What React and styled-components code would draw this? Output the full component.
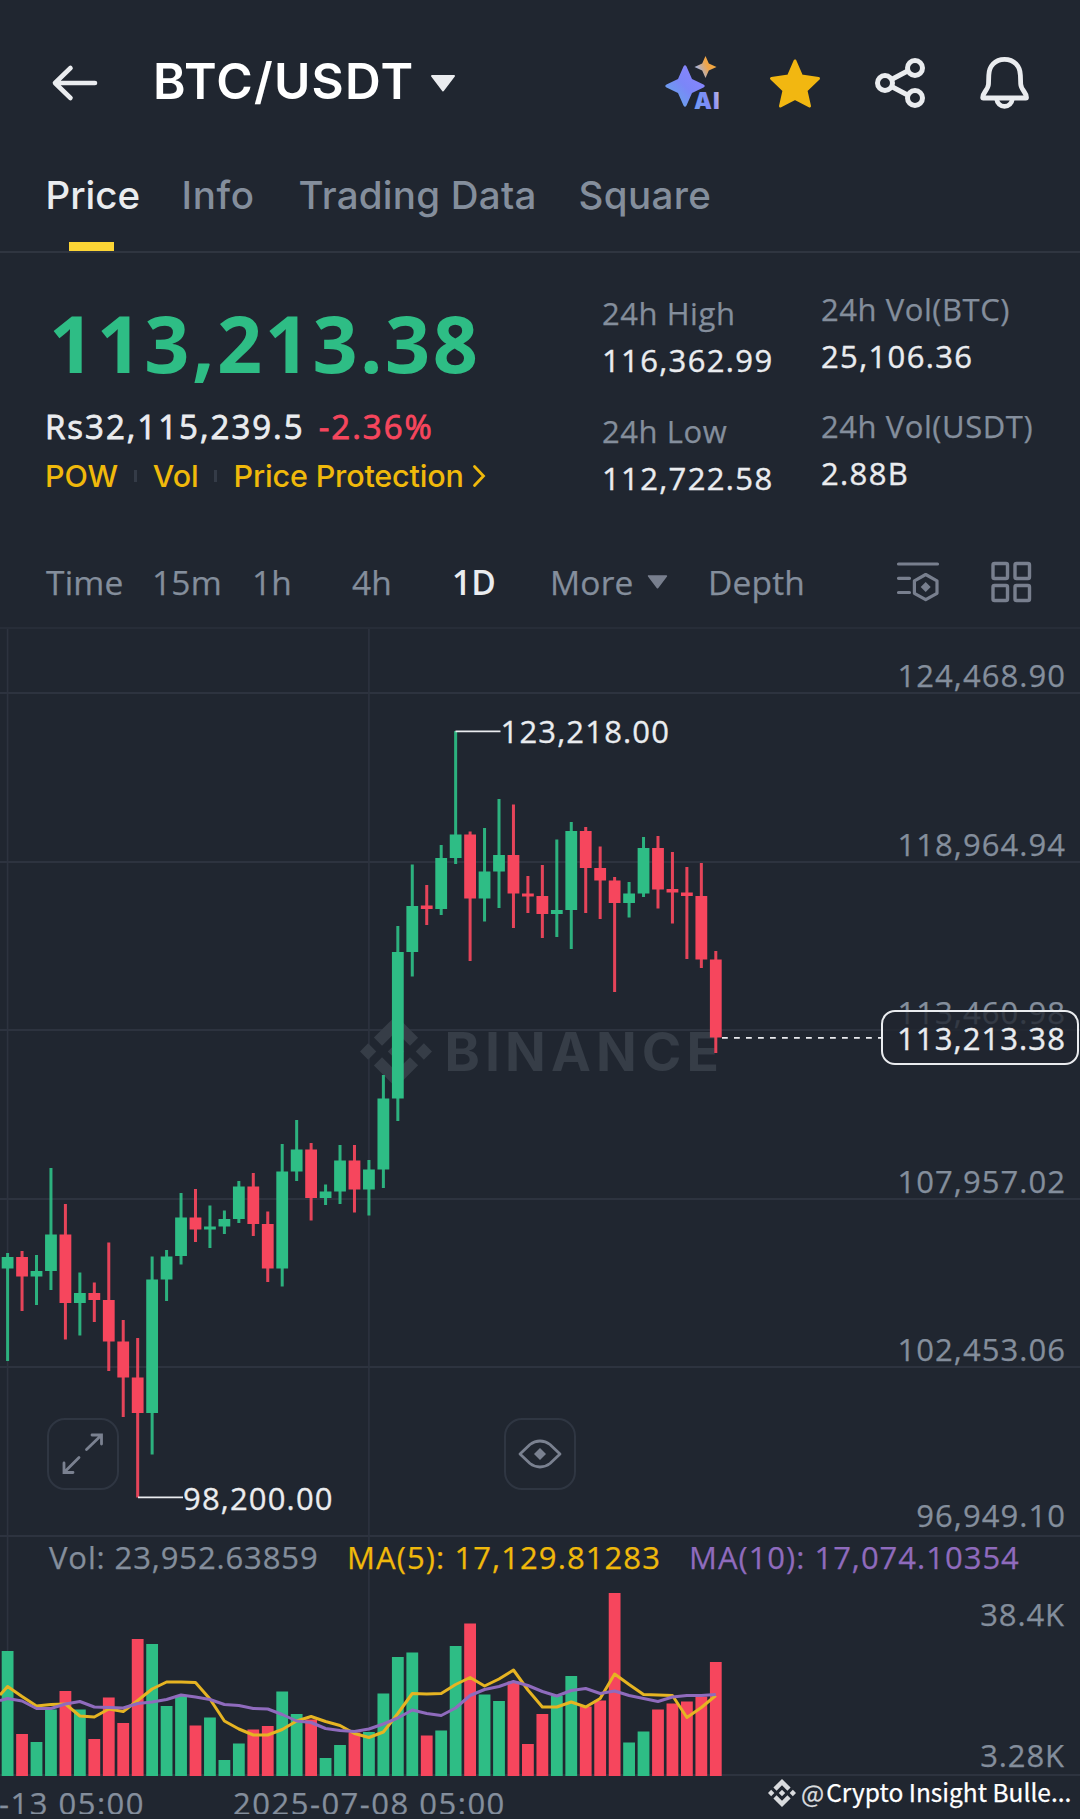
import React from 'react';
import styled, { createGlobalStyle } from 'styled-components';

const GlobalStyle = createGlobalStyle`
  :root {
    --bg: #202630;
    --line: #2d333f;
    --text-main: #eaecef;
    --text-gray: #848e9c;
    --green: #2ebd85;
    --red: #f6465d;
    --yellow: #f0b90b;
    --purple: #8f6bbd;
    --font-title: Inter, 'Liberation Sans', sans-serif;
    --font-number: 'Open Sans', 'Noto Sans', sans-serif;
  }

  * {
    box-sizing: border-box;
  }

  body {
    margin: 0;
    background: var(--bg);
    overflow: hidden;
  }
`;

const StyledPage = styled.div`
  width: 1080px;
  height: 1819px;
  overflow: hidden;
  display: flex;
  flex-direction: column;
  background: var(--bg);
  color: var(--text-main);
  font-family: var(--font-number);
  white-space: nowrap;
`;

/* ---------- header ---------- */

const StyledHeader = styled.header`
  height: 166px;
  flex: none;
  display: flex;
  align-items: center;
  padding: 0 47px 0 50px;
  font-family: var(--font-title);
`;

const StyledTitle = styled.h1`
  margin: 0 0 4px 53px;
  width: 277px;
  font-size: 49.5px;
  line-height: 60px;
  font-weight: 600;
  letter-spacing: 1.2px;
  color: #fff;
`;

const StyledHeaderIcons = styled.div`
  margin-left: auto;
  display: flex;
  gap: 45px;
`;

/* ---------- tabs ---------- */

const StyledTabs = styled.nav`
  height: 87px;
  flex: none;
  display: grid;
  grid-template-columns: 136px 117px 280px 140px;
  padding-left: 45.5px;
  border-bottom: 2px solid #2f3540;
  font-family: var(--font-title);
`;

const StyledTab = styled.div`
  display: flex;
  flex-direction: column;
  justify-content: space-between;
  width: max-content;
  font-size: 38.5px;
  line-height: 58px;
  font-weight: 500;
  letter-spacing: ${(p) => p.$ls}px;
  color: ${(p) => (p.$active ? 'var(--text-main)' : 'var(--text-gray)')};

  &::after {
    content: '';
    width: 45px;
    height: 9px;
    margin-right: 3px;
    align-self: center;
    background: ${(p) => (p.$active ? '#fcd535' : 'transparent')};
  }
`;

/* ---------- ticker ---------- */

const StyledTicker = styled.section`
  height: 283px;
  flex: none;
  display: grid;
  grid-template-columns: 557px 219px 1fr;
  padding-left: 45px;
`;

const StyledLastPrice = styled.div`
  margin: 39.5px 0 9px 4px;
  font-size: 79px;
  line-height: 100px;
  font-weight: 700;
  letter-spacing: 2.5px;
  color: var(--green);
`;

const StyledFiat = styled.div`
  display: flex;
  gap: 14px;
  font-size: 33px;
  line-height: 49px;
  letter-spacing: 2px;
  -webkit-text-stroke: 0.8px currentColor;
`;

const StyledChange = styled.span`
  color: var(--red);
`;

const StyledTags = styled.div`
  display: flex;
  align-items: center;
  font-family: var(--font-title);
  font-size: 30.5px;
  line-height: 50px;
  font-weight: 500;
  letter-spacing: -0.15px;
  color: var(--yellow);
`;

const StyledTagDivider = styled.i`
  width: 3px;
  height: 12px;
  margin: 0 16px;
  background: #343b47;
`;

const StyledStats = styled.div`
  padding-top: ${(p) => p.$top}px;
  display: flex;
  flex-direction: column;
  gap: 24px;
  font-size: 31px;
  line-height: ${(p) => p.$lh}px;
`;

const StyledStatLabel = styled.div`
  letter-spacing: 0.55px;
  color: var(--text-gray);
  -webkit-text-stroke: 0.25px currentColor;
`;

const StyledStatValue = styled.div`
  letter-spacing: 1.35px;
  color: var(--text-main);
  -webkit-text-stroke: 0.4px currentColor;
`;

/* ---------- intervals ---------- */

const StyledIntervals = styled.nav`
  height: 93px;
  flex: none;
  display: grid;
  grid-template-columns: 106px 100px 100px 100px 98px 158px 188px 94px 42px;
  align-items: center;
  padding: 1px 0 0 46px;
  font-size: 33.5px;
  color: var(--text-gray);
  border-bottom: 2px solid #272d38;
`;

const StyledInterval = styled.div`
  display: flex;
  align-items: center;
  gap: 13px;
  letter-spacing: 0.2px;
  font-weight: ${(p) => (p.$active ? 600 : 400)};
  color: ${(p) => (p.$active ? 'var(--text-main)' : 'inherit')};
  -webkit-text-stroke: ${(p) => (p.$active ? 0 : 0.25)}px currentColor;
`;

/* ---------- chart ---------- */

const StyledChart = styled.section`
  position: relative;
  height: 1147px;
  flex: none;
`;

const StyledPlot = styled.svg`
  position: absolute;
  inset: 0;
`;

const StyledPriceRow = styled.div`
  height: ${(p) => p.$h}px;
  display: flex;
  flex-direction: column;
  justify-content: flex-end;
  align-items: flex-end;
  padding: 0 14px ${(p) => p.$pb || 1}px 0;
  border-bottom: 2px solid var(--line);
  font-size: 31px;
  line-height: 32px;
  letter-spacing: 1.05px;
  color: var(--text-gray);
  -webkit-text-stroke: 0.25px currentColor;
`;

const StyledLegend = styled.div`
  position: relative;
  z-index: 1;
  display: grid;
  grid-template-columns: 298px 342px 1fr;
  padding: 0 0 0 49px;
  font-size: 31px;
  line-height: 41px;
  -webkit-text-stroke: 0.25px currentColor;
`;

const StyledLegendItem = styled.span`
  letter-spacing: ${(p) => p.$ls}px;
  color: ${(p) => p.$color};
`;

const StyledVolumeScale = styled.div`
  height: 198px;
  display: flex;
  flex-direction: column;
  justify-content: space-between;
  align-items: flex-end;
  padding: 20px 15px 3px 0;
  border-bottom: 2px solid var(--line);
  font-size: 31px;
  line-height: 32px;
  letter-spacing: 0.9px;
  color: var(--text-gray);
  -webkit-text-stroke: 0.25px currentColor;
`;

const StyledPriceTag = styled.div`
  position: absolute;
  top: 381px;
  right: 1px;
  width: 198px;
  height: 55px;
  padding-right: 11px;
  border: 2px solid var(--text-main);
  border-radius: 14px;
  background: rgba(32, 38, 48, 0.8);
  font-size: 31px;
  line-height: 53px;
  letter-spacing: 1.1px;
  text-align: right;
  -webkit-text-stroke: 0.4px currentColor;
`;

const StyledChartButton = styled.div`
  position: absolute;
  top: 789px;
  left: ${(p) => p.$left}px;
  width: 72px;
  height: 72px;
  border: 2.5px solid #2f3642;
  border-radius: 18px;
  display: flex;
  align-items: center;
  justify-content: center;
`;

/* ---------- dates ---------- */

const StyledDates = styled.footer`
  height: 38px;
  flex: none;
  overflow: hidden;
  display: grid;
  grid-template-columns: 233px 535px 1fr;
  font-size: 31px;
  line-height: 55px;
  letter-spacing: 1.5px;
  color: var(--text-gray);
  -webkit-text-stroke: 0.25px currentColor;
`;

const StyledFirstDate = styled.span`
  width: 145px;
  overflow: hidden;
  display: flex;
  justify-content: flex-end;
`;

const StyledCredit = styled.div`
  display: flex;
  align-items: center;
  height: 34px;
  font-family: 'Noto Sans CJK SC', sans-serif;
  font-size: 24.5px;
  line-height: 32px;
  letter-spacing: 0;
  color: #fff;
`;

const StyledAt = styled.span`
  margin: 0 2px 0 5px;
  color: #d9dbde;
`;

const StyledAuthor = styled.span`
  height: 34px;
`;

const STEP = 14.453;
const FIRST_X = 7.6;
const BODY = 11.8;
const FLOOR = 1776;

// [up, high, body top, body bottom, low, volume]
const candles = [
  [1, 1253, 1257, 1268.5, 1361, 125],
  [0, 1251, 1257, 1276.5, 1311, 42],
  [1, 1255, 1271, 1276.5, 1305, 34],
  [1, 1168, 1234.5, 1271, 1290, 66.5],
  [0, 1204, 1234.5, 1303, 1339.5, 85],
  [1, 1272.5, 1293, 1303, 1335.5, 66.5],
  [0, 1282.5, 1293, 1300, 1322, 37],
  [0, 1242.5, 1300, 1341.5, 1371, 78.5],
  [0, 1320, 1341.5, 1377.5, 1417, 53],
  [0, 1338, 1377.5, 1413, 1497.5, 137],
  [1, 1256.5, 1279.5, 1413, 1454.5, 132],
  [1, 1250, 1256.5, 1279.5, 1301, 70],
  [1, 1193, 1217.5, 1256, 1264.5, 80],
  [0, 1189, 1217.5, 1229.5, 1242, 50.5],
  [1, 1205.5, 1226.5, 1229.5, 1248, 58.5],
  [1, 1210.5, 1219, 1226.5, 1234, 16],
  [1, 1181, 1186.5, 1219, 1223, 32.5],
  [0, 1173, 1186.5, 1224, 1236, 46.5],
  [0, 1211.5, 1224, 1268.5, 1282, 50],
  [1, 1144, 1171.5, 1268.5, 1286.5, 84.5],
  [1, 1120, 1149.5, 1171.5, 1181, 62],
  [0, 1143, 1149.5, 1198, 1220.5, 56.5],
  [1, 1184.5, 1191.5, 1198, 1205, 18],
  [1, 1145, 1160.5, 1191.5, 1204, 31],
  [0, 1145, 1160.5, 1189.5, 1212.5, 43.5],
  [1, 1160, 1169.5, 1189.5, 1215.5, 44],
  [1, 1075, 1098.5, 1169.5, 1188, 82.5],
  [1, 926, 952, 1098.5, 1121, 119],
  [1, 864.5, 906, 952, 976.5, 123.5],
  [0, 885, 905.5, 909, 925, 40.5],
  [1, 845, 858, 909, 915, 45.5],
  [1, 731, 834.5, 858, 864, 130],
  [0, 831.5, 834.5, 898.5, 961, 152.5],
  [1, 828, 871.5, 898.5, 921.5, 81.5],
  [1, 799, 855, 871.5, 908, 75],
  [0, 804.5, 855, 893.5, 928, 94.5],
  [0, 876, 893.5, 896.5, 913, 32],
  [0, 865, 896, 914, 938, 62],
  [1, 839.5, 910, 914, 937, 80],
  [1, 822, 831, 910, 949, 100],
  [0, 827, 831, 868, 913, 69.5],
  [0, 846.5, 868, 880.5, 919, 75.5],
  [0, 877, 880.5, 903, 992, 183],
  [1, 882, 893.5, 903, 917.5, 33.5],
  [1, 837, 848, 893.5, 897, 44.5],
  [0, 836, 848, 889.5, 908.5, 66.5],
  [0, 852, 889, 892.5, 923.5, 72.5],
  [0, 867, 892.5, 896, 959, 74.5],
  [0, 863, 896, 959.5, 968, 79.5],
  [0, 951, 959.5, 1037.5, 1053, 114],
];

// First value sits on the left edge of the screen
const ma5 = [
  81, 89.5, 79.5, 70, 71.5, 72, 60, 59, 67, 64.5, 75.5, 87, 94, 94, 93.5, 77, 55, 47, 41, 41, 46.5, 55, 59.5, 54.5,
  50.5, 42.5, 38.5, 44, 62.5, 82.5, 82, 82.5, 91.5, 98.5, 90, 97, 106, 86, 69, 69, 74, 69, 77.5, 102, 91.5, 81.5, 81,
  80.5, 58.5, 68.5, 80.5,
];
const ma10 = [
  75.5, 77.5, 75, 67.5, 67.5, 72, 74.5, 69, 68.5, 68, 72.5, 74, 76.5, 81, 79, 76.5, 71.5, 70.5, 67.5, 67, 61.5, 55,
  53.5, 47.5, 45.5, 44.5, 47, 52, 58, 66, 62.5, 60.5, 68, 80.5, 86.5, 89.5, 94.5, 90.5, 84.5, 80, 85.5, 87.5, 82.5, 85,
  80.5, 77.5, 74.5, 79, 80.5, 80.5, 81.5,
];

const xAt = (i) => FIRST_X + i * STEP;
const toPoints = (line) => line.map((v, i) => `${i ? xAt(i - 1) : 0},${FLOOR - v}`).join(' ');

const BINANCE_LOGO =
  'M38.73 53.2 63.31 28.63 87.9 53.22l14.3-14.3L63.31 0 24.42 38.89ZM0 63.31 14.3 49l14.3 14.31-14.3 14.29ZM38.73 73.41 63.31 98 87.9 73.4l14.31 14.29L63.31 126.6 24.42 87.72ZM98 63.31 112.31 49l14.3 14.3-14.3 14.31ZM77.83 63.3 63.31 48.78 48.81 63.28 63.31 77.8Z';

const BackIcon = () => (
  <svg width="50" height="40" viewBox="50 63 50 40" fill="none" stroke="#eaecef" strokeWidth="4.6" strokeLinecap="round" strokeLinejoin="round">
    <path d="M95 83H55M70.5 68 55 83l15.500 15" />
  </svg>
);

const CaretIcon = ({ width, height, color }) => (
  <svg width={width} height={height} viewBox="0 0 26 17">
    <path d="M2 1h22L13 15.500Z" fill={color} stroke={color} strokeWidth="2" strokeLinejoin="round" />
  </svg>
);

const AiIcon = () => (
  <svg width="58" height="60" viewBox="664 53 58 60">
    <defs>
      <linearGradient id="ai-main" x1="0" y1="1" x2="1" y2="0">
        <stop offset="0" stopColor="#5fb0e6" />
        <stop offset="0.5" stopColor="#7b86f8" />
        <stop offset="1" stopColor="#8f84ff" />
      </linearGradient>
      <linearGradient id="ai-spark" x1="0" y1="0.8" x2="1" y2="0.3">
        <stop offset="0.2" stopColor="#a9b3d6" />
        <stop offset="0.6" stopColor="#f0a54a" />
        <stop offset="1" stopColor="#f2a93a" />
      </linearGradient>
      <linearGradient id="ai-text" x1="0" y1="0.6" x2="1" y2="0.4">
        <stop offset="0" stopColor="#6f9cf2" />
        <stop offset="0.7" stopColor="#8386fb" />
        <stop offset="1" stopColor="#b9b6dd" />
      </linearGradient>
    </defs>
    <path d="M683.500 66.500Q685 64 686.500 66.500L692 79 703.500 84.500Q706 86 703.500 87.500L692 93 686.500 105.500Q685 108 683.500 105.500L678 93 666.500 87.500Q664 86 666.500 84.500L678 79Z" fill="url(#ai-main)" />
    <path d="M705.500 56 708.800 63.500 716.500 67 708.800 70.500 705.500 78 702.200 70.500 694.500 67 702.200 63.500Z" fill="url(#ai-spark)" />
    <text x="694" y="109" textLength="25.500" fontWeight="900" fontSize="22.500" fill="url(#ai-text)">
      AI
    </text>
  </svg>
);

const StarIcon = () => (
  <svg width="56" height="60" viewBox="767 53 56 60">
    <path
      d="M795 61 801.500 76 818.500 78.500 806 90.500 809.500 106 795 98.500 780.500 106 784 90.500 771.500 78.500 788.500 76Z"
      fill="#f2b711"
      stroke="#f2b711"
      strokeWidth="3"
      strokeLinejoin="round"
    />
  </svg>
);

const ShareIcon = () => (
  <svg width="60" height="60" viewBox="868 53 60 60" fill="none" stroke="#eaecef" strokeWidth="5">
    <circle cx="885" cy="83" r="7.500" />
    <circle cx="915" cy="68" r="7.500" />
    <circle cx="915" cy="98" r="7.500" />
    <path d="m891.500 79.500 17-9M891.500 86.500l17 9" />
  </svg>
);

const BellIcon = () => (
  <svg width="60" height="60" viewBox="973 53 60 60" fill="none" stroke="#eaecef" strokeWidth="4.8" strokeLinejoin="round">
    <path d="M1004.500 59.300c-9.500 0-15.500 7-15.700 16l-.3 8.700c-.1 3-1.500 5-3.300 7.500-1.600 2.200-2.500 4-2.500 6 0 .5.200.5.700.5h42.400c.5 0 .7 0 .7-.5 0-2-.9-3.800-2.500-6-1.800-2.500-3.200-4.500-3.300-7.500l-.3-8.700c-.2-9-6.200-16-15.900-16Z" />
    <path d="M996.500 98.500c.7 5 4 7.800 8 7.800s7.300-2.800 8-7.800" />
  </svg>
);

const ChevronIcon = () => (
  <svg width="14" height="24" viewBox="0 0 14 24" fill="none" stroke="#f0b90b" strokeWidth="2.8" strokeLinecap="round">
    <path d="m2.500 2.500 9 9.500-9 9.500" />
  </svg>
);

const IndicatorIcon = () => (
  <svg width="44" height="44" viewBox="896 561.5 44 44" fill="none" stroke="#787f8e" strokeWidth="3.200">
    <path d="M898.500 565.500h39M898.500 579.800h11M898.500 594h11" strokeLinecap="round" />
    <path d="M925.700 576 937 582.300v12.500l-11.300 6.400-11.300-6.400v-12.500Z" strokeLinejoin="round" />
    <path d="m925.700 583.500 5 5-5 5-5-5Z" fill="#787f8e" stroke="none" />
  </svg>
);

const LayoutIcon = () => (
  <svg width="42" height="42" viewBox="990 561.5 42 42" fill="none" stroke="#787f8e" strokeWidth="3.400">
    <rect x="993" y="564" width="14.500" height="15" rx="1.500" />
    <rect x="1015" y="564" width="14.500" height="15" rx="1.500" />
    <rect x="993" y="586" width="14.500" height="15" rx="1.500" />
    <rect x="1015" y="586" width="14.500" height="15" rx="1.500" />
  </svg>
);

const ExpandIcon = () => (
  <svg width="42" height="42" viewBox="62 1433 42 42" fill="none" stroke="#7a8190" strokeWidth="2.800" strokeLinecap="round">
    <path d="M86.500 1449.500 101 1435.500M92 1435h9.500v9M79 1457.500 64.500 1472M64 1463v9.500h9" />
  </svg>
);

const EyeIcon = () => (
  <svg width="44" height="30" viewBox="0 0 44 30" fill="none" stroke="#7a8190" strokeWidth="2.800" strokeLinejoin="round">
    <path d="M2 15 12 5.500Q16.500 2 22 2T32 5.500L42 15 32 24.500Q27.500 28 22 28T12 24.500Z" />
    <path d="m22 9 6 6-6 6-6-6Z" fill="#7a8190" stroke="none" />
  </svg>
);

const Plot = () => (
  <StyledPlot width="1080" height="1147" viewBox="0 629 1080 1147">
    <g stroke="#2d333f" strokeWidth="1.600">
      <path d={`M${xAt(0)} 629V1776M${xAt(25)} 629V1776`} />
    </g>
    <g fill="#363d47">
      <path d={BINANCE_LOGO} transform="translate(360 1015.500) scale(0.5687)" />
      <text x="444.500" y="1071" textLength="274.500" fontFamily="Inter" fontWeight="700" fontSize="53.500">
        BINANCE
      </text>
    </g>
    {candles.map(([up, high, top, bottom, low, vol], i) => (
      <g key={i} fill={up ? 'var(--green)' : 'var(--red)'}>
        <rect x={xAt(i) - 1.5} y={high} width="3" height={low - high} opacity="0.92" />
        <rect x={xAt(i) - BODY / 2} y={top} width={BODY} height={bottom - top} />
        <rect x={xAt(i) - BODY / 2} y={FLOOR - vol} width={BODY} height={vol} />
      </g>
    ))}
    <g fill="none" strokeWidth="3" strokeLinejoin="round">
      <polyline points={toPoints(ma5)} stroke="#e6b422" />
      <polyline points={toPoints(ma10)} stroke="#8f6bbd" />
    </g>
    <g stroke="#eaecef" strokeWidth="1.700">
      <path d="M455.500 731.300H500.500M138 1497.300H183" />
      <path d="M722 1037.800H881" strokeDasharray="5.800 6.200" />
    </g>
    <g fill="#eaecef" stroke="#eaecef" strokeWidth="0.300" fontSize="31">
      <text x="500.500" y="743" textLength="168.500">
        123,218.00
      </text>
      <text x="183" y="1509.500" textLength="149.500">
        98,200.00
      </text>
    </g>
  </StyledPlot>
);

const App = () => (
  <StyledPage>
    <GlobalStyle />
    <StyledHeader>
      <BackIcon />
      <StyledTitle>BTC/USDT</StyledTitle>
      <CaretIcon width={26} height={17} color="#eaecef" />
      <StyledHeaderIcons>
        <AiIcon />
        <StarIcon />
        <ShareIcon />
        <BellIcon />
      </StyledHeaderIcons>
    </StyledHeader>

    <StyledTabs>
      <StyledTab $active $ls={0}>Price</StyledTab>
      <StyledTab $ls={0.7}>Info</StyledTab>
      <StyledTab $ls={0.25}>Trading Data</StyledTab>
      <StyledTab $ls={0.4}>Square</StyledTab>
    </StyledTabs>

    <StyledTicker>
      <div>
        <StyledLastPrice>113,213.38</StyledLastPrice>
        <StyledFiat>
          <span>Rs32,115,239.5</span>
          <StyledChange>-2.36%</StyledChange>
        </StyledFiat>
        <StyledTags>
          POW
          <StyledTagDivider />
          Vol
          <StyledTagDivider />
          Price Protection&nbsp;
          <ChevronIcon />
        </StyledTags>
      </div>
      <StyledStats $top={37} $lh={47}>
        <div>
          <StyledStatLabel>24h High</StyledStatLabel>
          <StyledStatValue>116,362.99</StyledStatValue>
        </div>
        <div>
          <StyledStatLabel>24h Low</StyledStatLabel>
          <StyledStatValue>112,722.58</StyledStatValue>
        </div>
      </StyledStats>
      <StyledStats $top={33} $lh={46.5}>
        <div>
          <StyledStatLabel>24h Vol(BTC)</StyledStatLabel>
          <StyledStatValue>25,106.36</StyledStatValue>
        </div>
        <div>
          <StyledStatLabel>24h Vol(USDT)</StyledStatLabel>
          <StyledStatValue>2.88B</StyledStatValue>
        </div>
      </StyledStats>
    </StyledTicker>

    <StyledIntervals>
      <StyledInterval>Time</StyledInterval>
      <StyledInterval>15m</StyledInterval>
      <StyledInterval>1h</StyledInterval>
      <StyledInterval>4h</StyledInterval>
      <StyledInterval $active>1D</StyledInterval>
      <StyledInterval>
        More
        <CaretIcon width={21} height={14} color="#787f8e" />
      </StyledInterval>
      <StyledInterval>Depth</StyledInterval>
      <IndicatorIcon />
      <LayoutIcon />
    </StyledIntervals>

    <StyledChart>
      <StyledPriceRow $h={65}>124,468.90</StyledPriceRow>
      <StyledPriceRow $h={168.6}>118,964.94</StyledPriceRow>
      <StyledPriceRow $h={168.6}>113,460.98</StyledPriceRow>
      <StyledPriceRow $h={168.6}>107,957.02</StyledPriceRow>
      <StyledPriceRow $h={168.6}>102,453.06</StyledPriceRow>
      <StyledPriceRow $h={168.6} $pb={3.5}>96,949.10</StyledPriceRow>
      <Plot />
      <StyledLegend>
        <StyledLegendItem $color="var(--text-gray)" $ls={0.88}>Vol: 23,952.63859</StyledLegendItem>
        <StyledLegendItem $color="var(--yellow)" $ls={1.1}>MA(5): 17,129.81283</StyledLegendItem>
        <StyledLegendItem $color="var(--purple)" $ls={1}>MA(10): 17,074.10354</StyledLegendItem>
      </StyledLegend>
      <StyledVolumeScale>
        <span>38.4K</span>
        <span>3.28K</span>
      </StyledVolumeScale>
      <StyledPriceTag>113,213.38</StyledPriceTag>
      <StyledChartButton $left={46.5}>
        <ExpandIcon />
      </StyledChartButton>
      <StyledChartButton $left={504}>
        <EyeIcon />
      </StyledChartButton>
    </StyledChart>

    <StyledDates>
      <StyledFirstDate>-13 05:00</StyledFirstDate>
      <span>2025-07-08 05:00</span>
      <StyledCredit>
        <svg width="28" height="28" viewBox="0 0 126.610 126.610" fill="#d9dbde">
          <path d={BINANCE_LOGO} />
        </svg>
        <StyledAt>@</StyledAt>
        <StyledAuthor>Crypto Insight Bulle...</StyledAuthor>
      </StyledCredit>
    </StyledDates>
  </StyledPage>
);

export default App;
